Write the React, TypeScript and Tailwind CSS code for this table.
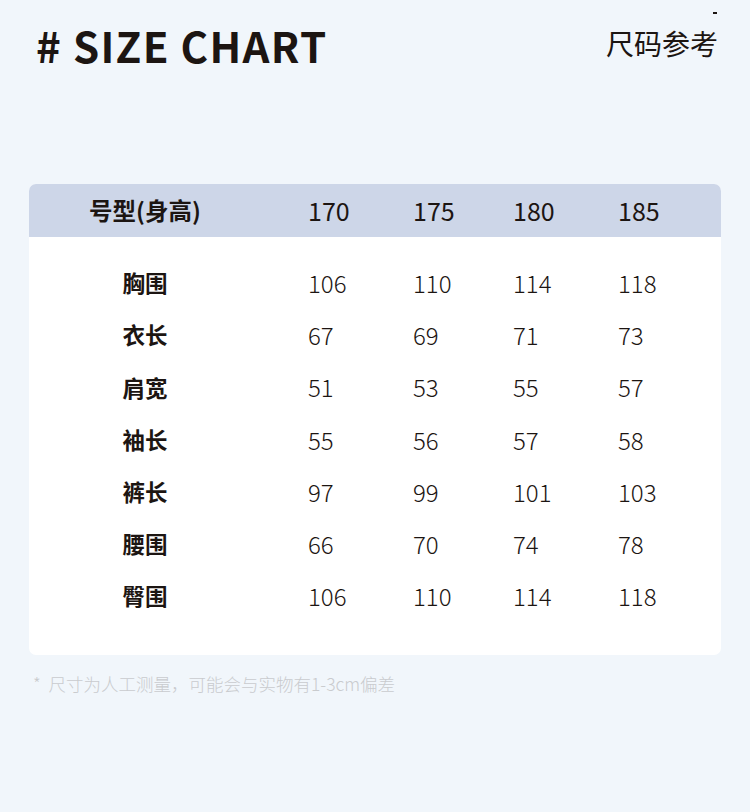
import React from 'react';

const sizes = ['170', '175', '180', '185'];

const rows = [
  { name: '胸围', values: ['106', '110', '114', '118'] },
  { name: '衣长', values: ['67', '69', '71', '73'] },
  { name: '肩宽', values: ['51', '53', '55', '57'] },
  { name: '袖长', values: ['55', '56', '57', '58'] },
  { name: '裤长', values: ['97', '99', '101', '103'] },
  { name: '腰围', values: ['66', '70', '74', '78'] },
  { name: '臀围', values: ['106', '110', '114', '118'] },
];

const font = { fontFamily: '"Noto Sans CJK SC", "Noto Sans", sans-serif' };

const App: React.FC = () => {
  return (
    <div className="w-[750px] h-[812px] bg-[#f1f6fb] text-[#1c1512] relative" style={font}>
      {/* Top bar */}
      <div className="flex justify-between items-center pl-[36px] pr-[32px] pt-[17px] h-[72px]">
        <h1 className="text-[42px] font-bold leading-none tracking-[1.3px]">
          #&nbsp;SIZE CHART
        </h1>
        <div className="relative">
          <span className="absolute -top-[17px] right-[1px] w-[4px] h-[2px] bg-[#1c1512]"></span>
          <span className="text-[28px] leading-none font-normal">尺码参考</span>
        </div>
      </div>

      {/* Table card */}
      <div className="mx-[29px] mt-[112px] rounded-[7px] bg-white overflow-hidden">
        <div className="grid grid-cols-[279px_105px_100px_105px_1fr] items-center h-[53px] bg-[#cdd6e8]">
          <div className="w-[232px] text-center text-[23.5px] font-bold">号型(身高)</div>
          {sizes.map((s) => (
            <div key={s} className="text-[25px] font-normal">{s}</div>
          ))}
        </div>
        <div className="pt-[20px] pb-[33px]">
          {rows.map((r) => (
            <div key={r.name} className="grid grid-cols-[279px_105px_100px_105px_1fr] items-center h-[52.2px]">
              <div className="w-[232px] text-center text-[22.5px] font-bold">{r.name}</div>
              {r.values.map((v, i) => (
                <div key={i} className="text-[24px] font-light">{v}</div>
              ))}
            </div>
          ))}
        </div>
      </div>

      {/* Note */}
      <p className="mt-[16px] ml-[33px] text-[17.5px] font-light text-[#c9cbce]">*&nbsp; 尺寸为人工测量，可能会与实物有1-3cm偏差</p>
    </div>
  );
};

export default App;
